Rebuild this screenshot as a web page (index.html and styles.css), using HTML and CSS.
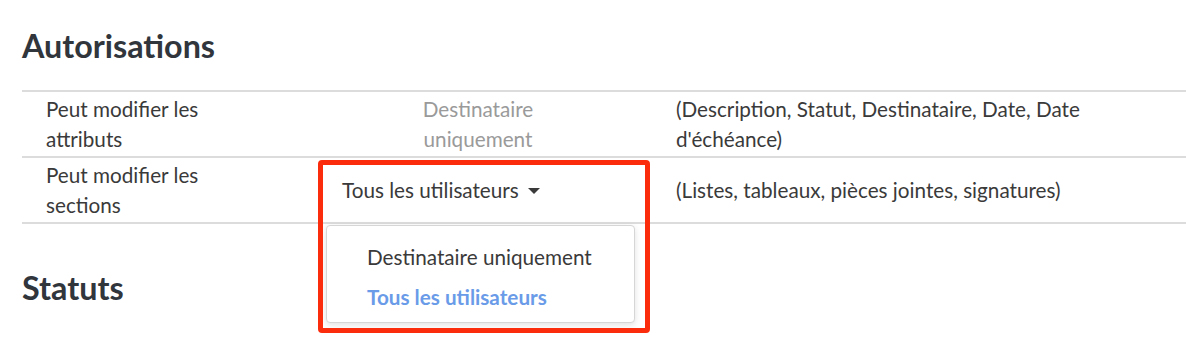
FILE: index.html
```html
<!DOCTYPE html>
<html lang="fr">

<head>
    <meta charset="UTF-8">
    <meta name="viewport" content="width=device-width, initial-scale=1.0">
    <title>Autorisations</title>
    <link rel="stylesheet" href="styles.css">
</head>

<body>

    <div class="settings-page">
        <h2 class="section-title">Autorisations</h2>

        <div class="perm-table">
            <div class="perm-row">
                <div class="perm-label">Peut modifier les attributs</div>
                <div class="perm-value disabled">Destinataire uniquement</div>
                <div class="perm-note">(Description, Statut, Destinataire, Date, Date d'échéance)</div>
            </div>
            <div class="perm-row">
                <div class="perm-label">Peut modifier les sections</div>
                <div class="perm-value dropdown">
                    <span class="dropdown-toggle">Tous les utilisateurs<span class="caret"></span></span>
                    <ul class="dropdown-menu">
                        <li>Destinataire uniquement</li>
                        <li class="selected">Tous les utilisateurs</li>
                    </ul>
                    <div class="highlight-box"></div>
                </div>
                <div class="perm-note">(Listes, tableaux, pièces jointes, signatures)</div>
            </div>
        </div>

        <h2 class="section-title next">Statuts</h2>
    </div>

</body>

</html>
```

FILE: styles.css
```css
body {
    margin: 0;
    background: #fff;
    font-family: Lato, "Noto Sans", sans-serif;
    color: #3a3a3a;
}

.settings-page {
    min-height: 340px;
    box-sizing: border-box;
    padding: 26px 0 0 22px;
}

.section-title {
    margin: 0;
    font-size: 32.3px;
    line-height: 40px;
    font-weight: bold;
    color: #31353c;
}

.section-title.next {
    margin-top: 44px;
}

.perm-table {
    margin-top: 24px;
    border-top: 2px solid #dcdcdc;
}

.perm-row {
    display: grid;
    grid-template-columns: 296px 332px 1fr;
    align-items: center;
    border-bottom: 2px solid #dcdcdc;
    font-size: 20.7px;
    line-height: 30px;
    height: 64px;
}

.perm-label {
    padding-left: 24px;
    width: 180px;
}

.perm-value {
    box-sizing: border-box;
}

.perm-value.disabled {
    color: #9a9a9a;
    text-align: center;
    padding: 0 76px 0 64px;
}

.perm-note {
    padding-left: 26px;
    max-width: 440px;
}

.dropdown {
    position: relative;
    height: 100%;
    display: flex;
    align-items: center;
    padding-left: 24px;
}

.dropdown-toggle {
    display: flex;
    align-items: center;
}

.caret {
    display: inline-block;
    width: 0;
    height: 0;
    margin-left: 9px;
    margin-top: 2px;
    border-left: 6px solid transparent;
    border-right: 6px solid transparent;
    border-top: 6px solid #3a3a3a;
}

.dropdown-menu {
    position: absolute;
    left: 8px;
    top: 67px;
    width: 309px;
    height: 98px;
    box-sizing: border-box;
    margin: 0;
    padding: 11px 0 0 40px;
    list-style: none;
    background: #fff;
    border: 1px solid #d6d6d6;
    border-radius: 4px;
    box-shadow: 0 2px 6px rgba(0, 0, 0, 0.12);
    line-height: 40px;
}

.dropdown-menu .selected {
    color: #6a9be8;
    font-weight: bold;
}

.highlight-box {
    position: absolute;
    left: 0;
    top: 2px;
    width: 332px;
    height: 173px;
    box-sizing: border-box;
    border: 5px solid #fb2c0c;
    border-radius: 4px;
}
```
